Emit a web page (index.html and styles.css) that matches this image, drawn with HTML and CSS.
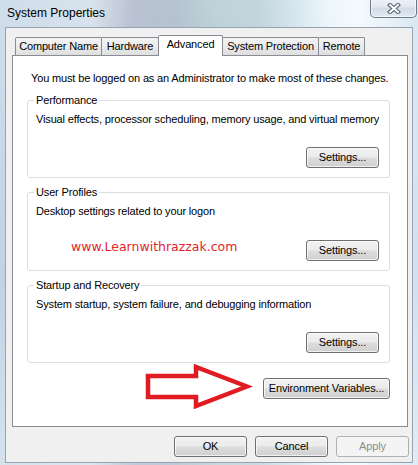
FILE: index.html
```html
<!DOCTYPE html>
<html>
<head>
<meta charset="utf-8">
<title>System Properties</title>
<link rel="stylesheet" href="styles.css">
</head>
<body>
<div class="window">
  <div class="titlebar">
    <span class="title">System Properties</span>
    <span class="close">
      <svg width="14" height="11" viewBox="0 0 14 11">
        <path d="M3 2 L11 9 M11 2 L3 9" stroke="#5b6572" stroke-width="4.2" stroke-linecap="square"/>
        <path d="M3 2 L11 9 M11 2 L3 9" stroke="#ffffff" stroke-width="2" stroke-linecap="square"/>
      </svg>
    </span>
  </div>
  <div class="client">
    <div class="tabs">
      <div class="tab tab-cn">Computer Name</div>
      <div class="tab tab-hw">Hardware</div>
      <div class="tab tab-adv active">Advanced</div>
      <div class="tab tab-sp">System Protection</div>
      <div class="tab tab-rm">Remote</div>
    </div>
    <div class="panel">
      <div class="notice">You must be logged on as an Administrator to make most of these changes.</div>
      <fieldset class="group">
        <legend>Performance</legend>
        <div class="desc">Visual effects, processor scheduling, memory usage, and virtual memory</div>
        <div class="row"><button class="btn">Settings...</button></div>
      </fieldset>
      <fieldset class="group">
        <legend>User Profiles</legend>
        <div class="desc">Desktop settings related to your logon</div>
        <div class="row"><span class="watermark">www.Learnwithrazzak.com</span><button class="btn">Settings...</button></div>
      </fieldset>
      <fieldset class="group">
        <legend>Startup and Recovery</legend>
        <div class="desc">System startup, system failure, and debugging information</div>
        <div class="row"><button class="btn">Settings...</button></div>
      </fieldset>
      <div class="envrow"><button class="btn btn-env">Environment Variables...</button></div>
      <svg class="arrow" width="112" height="50" viewBox="0 0 112 50">
        <polygon points="7,15 55,15 55,6 106,25.5 55,45 55,36 7,36" fill="none" stroke="#e01b22" stroke-width="4.5" stroke-linejoin="miter"/>
      </svg>
    </div>
    <div class="actions">
      <button class="btn">OK</button>
      <button class="btn">Cancel</button>
      <button class="btn disabled">Apply</button>
    </div>
  </div>
</div>
</body>
</html>
```
FILE: styles.css
```css
* { box-sizing: border-box; }
html, body { margin: 0; padding: 0; }
body {
  width: 418px;
  height: 465px;
  overflow: hidden;
  font-family: "Liberation Sans", Arial, sans-serif;
  font-size: 11px;
  letter-spacing: -0.15px;
  color: #000;
}
.window {
  width: 418px;
  height: 465px;
  display: flex;
  flex-direction: column;
  padding: 0 5px 2px 5px;
  background:
    linear-gradient(180deg, rgba(255,255,255,0.25) 0%, rgba(255,255,255,0) 60%, rgba(255,255,255,0.35) 100%),
    linear-gradient(90deg, #c0d3e4 0%, #cbdae7 22%, #a4aec4 32%, #9eb1c2 42%, #a9c6cc 52%, #b0c8d2 62%, #c7dde8 70%, #e6f3f9 78%, #f1f9fd 86%, #cfe1ef 100%);
}
.titlebar {
  height: 27px;
  display: flex;
  align-items: flex-start;
  flex: none;
}
.title {
  padding: 5px 0 0 2px;
  line-height: 16px;
  font-size: 12px;
  letter-spacing: 0;
}
.close {
  margin-left: auto;
  margin-right: -4px;
  margin-top: -2px;
  width: 47px;
  height: 20px;
  border: 1px solid #6d7886;
  border-top: none;
  border-radius: 0 0 5px 5px;
  background: linear-gradient(180deg, #eef3f8 0%, #e2e9f1 45%, #d2dce7 55%, #e1e9f1 100%);
  box-shadow: inset 0 0 0 1px rgba(255,255,255,0.6);
  display: flex;
  align-items: center;
  justify-content: center;
  padding-top: 2px;
}
.close svg { display: block; }
.client {
  flex: 1;
  min-height: 0;
  background: #f0f0f0;
  border: 1px solid #97a3b2;
  padding: 7px 4px 0 6px;
  display: flex;
  flex-direction: column;
}
.tabs {
  display: flex;
  align-items: flex-end;
  height: 21px;
  padding-left: 3px;
  margin-bottom: -1px;
  position: relative;
  z-index: 1;
  flex: none;
}
.tab {
  height: 18px;
  margin-bottom: 1px;
  border: 1px solid #898c95;
  border-bottom: none;
  border-radius: 2px 2px 0 0;
  background: linear-gradient(180deg, #f3f3f3 0%, #ebebeb 50%, #dedede 100%);
  text-align: center;
  line-height: 17px;
  white-space: nowrap;
}
.tab + .tab { margin-left: -1px; }
.tab-cn { width: 87px; }
.tab-hw { width: 58px; }
.tab-adv { width: 65px; }
.tab-sp { width: 97px; }
.tab-rm { width: 47px; }
.tab.active {
  height: 21px;
  margin-bottom: 0;
  background: #ffffff;
  position: relative;
  z-index: 2;
  line-height: 17px;
}
.panel {
  position: relative;
  background: #ffffff;
  border: 1px solid #898c95;
  padding: 14px 17px 27px 14px;
  flex: none;
}
.notice {
  padding-left: 4px;
  line-height: 16px;
  white-space: nowrap;
}
.group {
  margin: 6px 0 0 0;
  padding: 3px 10px 9px 8px;
  border: 1px solid #d5dfe5;
  border-radius: 3px;
  min-width: 0;
}
.group legend {
  padding: 0 2px;
  margin-left: -2px;
  line-height: 16px;
}
.desc { line-height: 16px; white-space: nowrap; }
.row {
  display: flex;
  justify-content: flex-end;
  align-items: center;
  margin-top: 20px;
}
.watermark {
  margin-right: auto;
  margin-left: 35px;
  margin-bottom: 6px;
  color: #e0252d;
  font-family: "DejaVu Sans", Verdana, sans-serif;
  font-size: 12.5px;
  letter-spacing: 0;
  line-height: 16px;
}
.btn {
  width: 73px;
  height: 21px;
  padding: 0;
  border: 1px solid #707070;
  border-radius: 3px;
  background: linear-gradient(180deg, #f2f2f2 0%, #ebebeb 48%, #dddddd 52%, #cfcfcf 100%);
  box-shadow: inset 0 0 0 1px rgba(255,255,255,0.7);
  font-family: inherit;
  font-size: 11px;
  letter-spacing: -0.15px;
  line-height: 19px;
  color: #000;
  text-align: center;
  white-space: nowrap;
}
.btn-env { width: 127px; }
.envrow {
  display: flex;
  justify-content: flex-end;
  margin-top: 15px;
}
.arrow {
  position: absolute;
  left: 128px;
  top: 305px;
}
.actions {
  display: flex;
  justify-content: flex-end;
  gap: 8px;
  margin-top: 9px;
  margin-right: -1px;
  flex: none;
}
.btn.disabled {
  border-color: #adb2b5;
  background: #f4f4f4;
  box-shadow: none;
  color: #8c8c8c;
}
```
